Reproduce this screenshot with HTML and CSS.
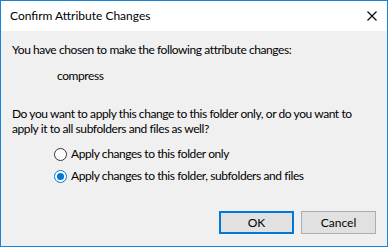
FILE: index.html
```html
<!DOCTYPE html>
<html>
<head>
<meta charset="utf-8">
<link rel="stylesheet" href="styles.css">
</head>
<body>
<div class="window">
  <div class="titlebar">
    <span class="title">Confirm Attribute Changes</span>
    <svg class="close" width="10" height="10" viewBox="0 0 10 10"><path d="M0.5 0.5 L9.5 9.5 M9.5 0.5 L0.5 9.5" stroke="#000" stroke-width="1.1" fill="none"/></svg>
  </div>
  <div class="content">
    <p class="line intro">You have chosen to make the following attribute changes:</p>
    <p class="line attr">compress</p>
    <p class="line question">Do you want to apply this change to this folder only, or do you want to<br>apply it to all subfolders and files as well?</p>
    <div class="options">
      <label class="option">
        <svg class="radio" width="13" height="13" viewBox="0 0 13 13"><circle cx="6.5" cy="6.5" r="6" fill="#fff" stroke="#333" stroke-width="1"/></svg>
        <span>Apply changes to this folder only</span>
      </label>
      <label class="option">
        <svg class="radio" width="13" height="13" viewBox="0 0 13 13"><circle cx="6.5" cy="6.5" r="6" fill="#fff" stroke="#0078d7" stroke-width="1"/><circle cx="6.5" cy="6.5" r="3.6" fill="#0078d7"/></svg>
        <span>Apply changes to this folder, subfolders and files</span>
      </label>
    </div>
    <div class="buttons">
      <button class="btn default">OK</button>
      <button class="btn">Cancel</button>
    </div>
  </div>
</div>
</body>
</html>
```
FILE: styles.css
```css
html, body {
  margin: 0;
  padding: 0;
}
body {
  font-family: Lato, "Liberation Sans", sans-serif;
  font-size: 12px;
  color: #000;
}
.window {
  width: 388px;
  height: 247px;
  box-sizing: border-box;
  border: 1px solid #1883d7;
  display: flex;
  flex-direction: column;
  background: #f0f0f0;
}
.titlebar {
  height: 30px;
  background: #fff;
  display: flex;
  align-items: center;
  justify-content: space-between;
  padding: 0 10px 0 9px;
  flex-shrink: 0;
}
.title {
  line-height: 16px;
  padding-bottom: 1px;
}
.close {
  display: block;
  margin-bottom: 1px;
}
.content {
  flex: 1;
  display: flex;
  flex-direction: column;
  padding: 11px 11px 12px 11px;
  letter-spacing: -0.42px;
}
.line {
  margin: 0;
  line-height: 15px;
  white-space: nowrap;
}
.attr {
  margin-top: 11px;
  padding-left: 45px;
}
.question {
  margin-top: 23px;
}
.options {
  margin-top: 10px;
  padding-left: 42px;
  display: flex;
  flex-direction: column;
  gap: 6px;
}
.option {
  display: flex;
  align-items: center;
  gap: 4px;
  height: 16px;
  line-height: 16px;
}
.radio {
  display: block;
}
.buttons {
  margin-top: auto;
  display: flex;
  justify-content: flex-end;
  gap: 7px;
}
.btn {
  width: 75px;
  height: 23px;
  box-sizing: border-box;
  background: #e1e1e1;
  border: 1px solid #adadad;
  font-family: inherit;
  font-size: 12px;
  letter-spacing: 0;
  color: #000;
  padding: 0;
  margin: 0;
}
.btn.default {
  border: 2px solid #0078d7;
}
```
